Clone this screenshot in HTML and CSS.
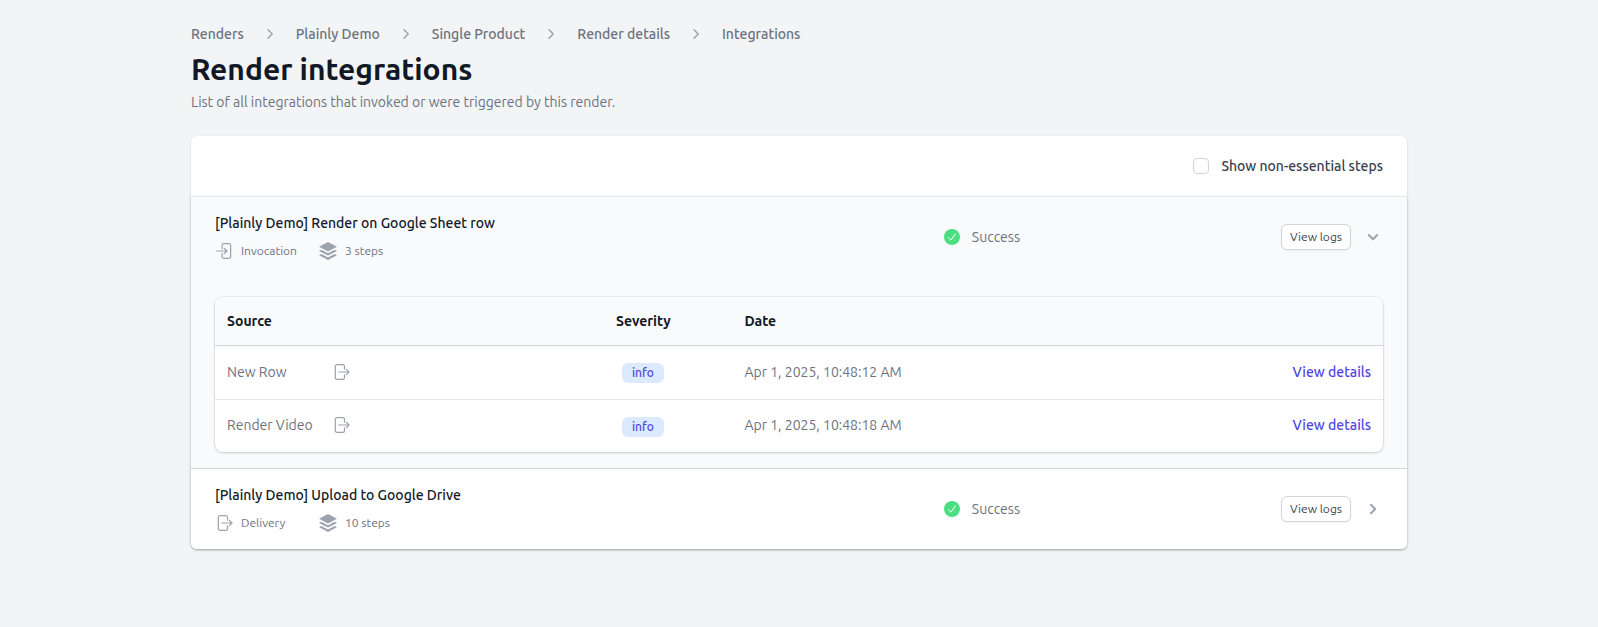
FILE: index.html
```html
<!DOCTYPE html>
<html lang="en">
<head>
    <meta charset="UTF-8">
    <meta name="viewport" content="width=device-width, initial-scale=1.0">
    <title>Render integrations</title>
    <link rel="stylesheet" href="styles.css">
</head>
<body>
    <!-- shared icons -->
    <svg class="sprite" aria-hidden="true">
        <symbol id="chevron" viewBox="0 0 20 20">
            <path d="M8 5.800 12.200 10 8 14.200" fill="none" stroke="currentColor" stroke-linecap="round" stroke-linejoin="round"/>
        </symbol>
        <symbol id="arrow-in" viewBox="-1 -0.5 19 19">
            <path d="M6.500 6.500V3a1.800 1.800 0 0 1 1.800-1.800h5.400A1.800 1.800 0 0 1 15.500 3v12a1.800 1.800 0 0 1-1.800 1.800H8.300A1.800 1.800 0 0 1 6.500 15v-3.500M.8 9h10.600M8.800 6.200 11.600 9l-2.800 2.800" fill="none" stroke="currentColor" stroke-width="1.300" stroke-linecap="round" stroke-linejoin="round"/>
        </symbol>
        <symbol id="arrow-out" viewBox="-1 -0.5 19 19">
            <path d="M12.200 6V3a1.800 1.800 0 0 0-1.800-1.800H4.300A1.800 1.800 0 0 0 2.500 3v12a1.800 1.800 0 0 0 1.800 1.800h6.100a1.800 1.800 0 0 0 1.800-1.800v-3M6 9h10.800M14.200 6.200 17 9l-2.800 2.800" fill="none" stroke="currentColor" stroke-width="1.300" stroke-linecap="round" stroke-linejoin="round"/>
        </symbol>
        <symbol id="layers" viewBox="0 0 18 18">
            <path d="M9 0 18 4.700 9 9.400 0 4.700zM2.200 7.700 9 11.300l6.800-3.600L18 8.900l-9 4.700-9-4.700zM2.200 12 9 15.500l6.800-3.500L18 13.200 9 18l-9-4.800z" fill="currentColor"/>
        </symbol>
        <symbol id="check" viewBox="0 0 16 16">
            <circle cx="8" cy="8" r="8" fill="#4ade80"/>
            <path d="M4.500 8.700 7 11.200l4.500-6.400" fill="none" stroke="#fff" stroke-width="1" stroke-linecap="round" stroke-linejoin="round"/>
        </symbol>
    </svg>

    <main class="container">
        <nav class="breadcrumbs" aria-label="Breadcrumb">
            <a href="#">Renders</a>
            <svg><use href="#chevron"/></svg>
            <a href="#">Plainly Demo</a>
            <svg><use href="#chevron"/></svg>
            <a href="#">Single Product</a>
            <svg><use href="#chevron"/></svg>
            <a href="#">Render details</a>
            <svg><use href="#chevron"/></svg>
            <a href="#">Integrations</a>
        </nav>
        <h1>Render integrations</h1>
        <p class="subtitle">List of all integrations that invoked or were triggered by this render.</p>

        <div class="card">
            <div class="toolbar">
                <input type="checkbox" id="nonEssential">
                <label for="nonEssential">Show non-essential steps</label>
            </div>

            <div class="list">
                <section class="integration open">
                    <div class="row">
                        <div>
                            <h2>[Plainly Demo] Render on Google Sheet row</h2>
                            <div class="meta">
                                <span class="kind"><svg><use href="#arrow-in"/></svg>Invocation</span>
                                <span><svg><use href="#layers"/></svg>3 steps</span>
                            </div>
                        </div>
                        <div class="status"><svg><use href="#check"/></svg>Success</div>
                        <div class="actions">
                            <button class="logs">View logs</button>
                            <button class="toggle" aria-label="Collapse"><svg><use href="#chevron"/></svg></button>
                        </div>
                    </div>
                    <div class="steps">
                        <table>
                            <thead>
                                <tr>
                                    <th class="source">Source</th>
                                    <th class="severity">Severity</th>
                                    <th>Date</th>
                                    <th></th>
                                </tr>
                            </thead>
                            <tbody>
                                <tr>
                                    <td><div class="step"><span>New Row</span><svg><use href="#arrow-out"/></svg></div></td>
                                    <td class="severity"><span class="badge">info</span></td>
                                    <td>Apr 1, 2025, 10:48:12 AM</td>
                                    <td class="details"><a href="#">View details</a></td>
                                </tr>
                                <tr>
                                    <td><div class="step"><span>Render Video</span><svg><use href="#arrow-out"/></svg></div></td>
                                    <td class="severity"><span class="badge">info</span></td>
                                    <td>Apr 1, 2025, 10:48:18 AM</td>
                                    <td class="details"><a href="#">View details</a></td>
                                </tr>
                            </tbody>
                        </table>
                    </div>
                </section>

                <section class="integration">
                    <div class="row">
                        <div>
                            <h2>[Plainly Demo] Upload to Google Drive</h2>
                            <div class="meta">
                                <span class="kind"><svg><use href="#arrow-out"/></svg>Delivery</span>
                                <span><svg><use href="#layers"/></svg>10 steps</span>
                            </div>
                        </div>
                        <div class="status"><svg><use href="#check"/></svg>Success</div>
                        <div class="actions">
                            <button class="logs">View logs</button>
                            <button class="toggle" aria-label="Expand"><svg><use href="#chevron"/></svg></button>
                        </div>
                    </div>
                </section>
            </div>
        </div>
    </main>
</body>
</html>
```
FILE: styles.css
```css
* {
    box-sizing: border-box;
}
body {
    margin: 0;
    background: #f3f4f6;
    color: #6b7280;
    font-family: 'Ubuntu', 'Noto Sans', sans-serif;
    font-size: 14px;
    line-height: 20px;
}
h1, h2, p {
    margin: 0;
}
a {
    color: inherit;
    text-decoration: none;
}
svg {
    display: block;
    flex: none;
    width: 18px;
    height: 18px;
    color: #9ca3af;
}
.sprite {
    position: absolute;
    width: 0;
    height: 0;
}
.container {
    max-width: 1280px;
    margin: 0 auto;
    padding: 24px 32px;
}
.breadcrumbs {
    display: flex;
    align-items: center;
    gap: 16px;
    font-weight: 500;
}
.breadcrumbs svg {
    width: 20px;
    height: 20px;
    stroke-width: 1.5;
}
h1 {
    margin-top: 7px;
    color: #111827;
    font-size: 30px;
    font-weight: 700;
    line-height: 36px;
}
.subtitle {
    margin-top: 5px;
}
.card {
    margin-top: 24px;
    background: #fff;
    border-radius: 6px;
    box-shadow: 0 1px 3px rgba(0, 0, 0, 0.1), 0 1px 2px rgba(0, 0, 0, 0.06);
}
.toolbar {
    display: flex;
    align-items: center;
    justify-content: flex-end;
    gap: 12px;
    padding: 20px 24px;
    color: #374151;
    font-weight: 500;
}
.toolbar input {
    appearance: none;
    width: 16px;
    height: 16px;
    margin: 0;
    background: #fff;
    border: 1px solid #d1d5db;
    border-radius: 4px;
}
.toolbar input:checked {
    background: #4f46e5;
}
.list {
    border-radius: 0 0 6px 6px;
    box-shadow: 0 1px 3px rgba(0, 0, 0, 0.15), 0 1px 2px rgba(0, 0, 0, 0.08);
    overflow: hidden;
}
.integration {
    background: #fff;
    border-top: 1px solid #d1d5db;
}
.integration.open {
    padding-bottom: 16px;
    background: #f9fafb;
    border-color: #e5e7eb;
}
.row {
    display: grid;
    grid-template-columns: 62.4% 1fr auto;
    align-items: center;
    padding: 16px 24px;
}
h2 {
    color: #111827;
    font-size: 14px;
    font-weight: 500;
    line-height: 20px;
}
.meta {
    display: flex;
    margin-top: 8px;
    font-size: 12px;
}
.meta span {
    display: flex;
    align-items: center;
    gap: 8px;
}
.meta .kind {
    width: 104px;
}
.status {
    display: flex;
    align-items: center;
    gap: 12px;
}
.status svg {
    width: 16px;
    height: 16px;
}
.actions {
    display: flex;
    align-items: center;
    justify-content: flex-end;
    gap: 12px;
}
.logs {
    padding: 4px 8px;
    background: #fff;
    border: 1px solid #d1d5db;
    border-radius: 6px;
    box-shadow: 0 1px 2px rgba(0, 0, 0, 0.05);
    color: #374151;
    font-family: inherit;
    font-size: 12px;
    line-height: 16px;
    white-space: nowrap;
    cursor: pointer;
}
.toggle {
    padding: 0;
    background: none;
    border: none;
    cursor: pointer;
}
.toggle svg {
    width: 20px;
    height: 20px;
    stroke-width: 2;
}
.open .toggle svg {
    transform: rotate(90deg);
}
.steps {
    margin: 20px 24px 0;
    background: #fff;
    border-radius: 8px;
    box-shadow: 0 0 0 1px rgba(0, 0, 0, 0.05), 0 1px 3px rgba(0, 0, 0, 0.15);
    overflow: hidden;
}
table {
    width: 100%;
    border-spacing: 0;
    table-layout: fixed;
}
th {
    height: 49px;
    padding: 0 12px;
    background: #f9fafb;
    border-bottom: 1px solid #d1d5db;
    color: #111827;
    font-weight: 600;
    text-align: left;
}
td {
    height: 53px;
    padding: 0 12px 2px;
}
tbody tr + tr td {
    border-top: 1px solid #e5e7eb;
}
.source {
    width: 33.3%;
}
.severity {
    width: 11%;
}
td.severity {
    padding: 0 12px 0 18px;
}
.step {
    display: flex;
    align-items: center;
}
.step span {
    width: 105px;
}
.badge {
    display: inline-block;
    padding: 0 10px;
    background: #dbeafe;
    border-radius: 6px;
    color: #4f46e5;
    font-size: 12px;
    font-weight: 500;
}
.details {
    color: #4f46e5;
    font-weight: 500;
    text-align: right;
}
```
